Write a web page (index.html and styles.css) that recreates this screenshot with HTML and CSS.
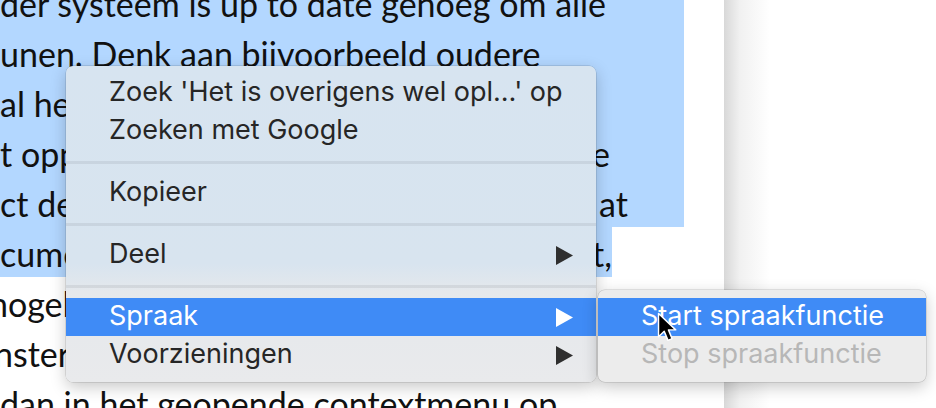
FILE: index.html
```html
<!DOCTYPE html>
<html lang="nl">
<head>
<meta charset="utf-8">
<title>Contextmenu</title>
<link rel="stylesheet" href="styles.css">
</head>
<body>
<div class="screen">
  <main class="doc">
    <div class="line sel">der systeem is up to date genoeg om alle</div>
    <div class="line sel">unen. Denk aan bijvoorbeeld oudere</div>
    <div class="line sel">al het</div>
    <div class="line sel"><span class="run run-4">t opp</span>e</div>
    <div class="line sel"><span class="run run-5">ct de</span>at</div>
    <div class="line sel part"><span class="run run-6">cume</span>t,</div>
    <div class="line shift-7">nogel</div>
    <div class="line shift-8">nster</div>
    <div class="line">dan in het geopende contextmenu op</div>
  </main>
  <aside class="side"></aside>

  <div class="menu main-menu">
    <div class="item">Zoek 'Het is overigens wel opl…' op</div>
    <div class="item">Zoeken met Google</div>
    <div class="sep"></div>
    <div class="item">Kopieer</div>
    <div class="sep"></div>
    <div class="item">Deel<svg class="arrow" width="17" height="19" viewBox="0 0 17 19"><polygon points="0,0 17,9.5 0,19"/></svg></div>
    <div class="sep"></div>
    <div class="item active">Spraak<svg class="arrow" width="17" height="19" viewBox="0 0 17 19"><polygon points="0,0 17,9.5 0,19"/></svg></div>
    <div class="item">Voorzieningen<svg class="arrow" width="17" height="19" viewBox="0 0 17 19"><polygon points="0,0 17,9.5 0,19"/></svg></div>
  </div>

  <div class="menu sub-menu">
    <div class="item active">Start spraakfunctie</div>
    <div class="item disabled">Stop spraakfunctie</div>
  </div>

  <svg class="cursor" width="22" height="32" viewBox="0 0 15 22"><path d="M1 1 V17 L4.9 13.3 L7.5 19.5 L10.3 18.3 L7.8 12.3 H12.8 Z" fill="#000" stroke="#fff" stroke-width="1" stroke-linejoin="round"/></svg>
</div>
</body>
</html>
```

FILE: styles.css
```css
* { box-sizing: border-box; }

html, body {
  margin: 0;
  padding: 0;
  background: #fff;
}

.screen {
  position: relative;
  width: 936px;
  height: 408px;
  overflow: hidden;
  display: flex;
}

.doc {
  width: 684px;
  flex: none;
  margin-top: -23px;
  font-family: Lato, "Open Sans", sans-serif;
  font-size: 34px;
  color: #111;
}

.line {
  height: 50px;
  padding-top: 5px;
  line-height: 44px;
  white-space: nowrap;
  overflow: hidden;
}

.line.sel { background: #b3d7ff; }
.line.part { width: fit-content; }
.line.shift-7 { text-indent: -11px; }
.line.shift-8 { text-indent: -6px; }

.run {
  display: inline-block;
  vertical-align: top;
  overflow: hidden;
  white-space: nowrap;
}
.run-4 { width: 592px; }
.run-5 { width: 599px; }
.run-6 { width: 592px; }

.side {
  flex: 1;
  margin-left: 40px;
  background: linear-gradient(to right, #d8d8d8 0, #f1f1f1 16px, #fff 46px);
}

.menu {
  position: absolute;
  padding: 8px 0;
  border-radius: 7px;
  font-family: Inter, "Liberation Sans", sans-serif;
  font-size: 27px;
  color: #262626;
  box-shadow: 0 0 0 0.5px rgba(0, 0, 0, 0.18), 0 5px 16px rgba(0, 0, 0, 0.22);
  overflow: hidden;
}

.main-menu {
  left: 66px;
  top: 66px;
  width: 530px;
  background: linear-gradient(to bottom, #d7e4f0 0, #d8e4ef 198px, #e5e8ec 226px, #e9eaec 100%);
  z-index: 2;
}

.sub-menu {
  left: 598px;
  top: 290px;
  width: 328px;
  background: #ececec;
  z-index: 3;
}

.item {
  height: 38px;
  line-height: 32px;
  padding: 0 23px 3px 43px;
  display: flex;
  align-items: center;
  justify-content: space-between;
  white-space: nowrap;
}

.item.active {
  background: #3f8bf6;
  color: #fff;
}

.item.disabled { color: #b7b7b7; }

.arrow { fill: #2f2f2f; flex: none; margin-top: 3px; }
.item.active .arrow { fill: #fff; }

.sep {
  height: 3px;
  margin: 11px 0 10px;
  background: rgba(0, 0, 0, 0.065);
}

.cursor {
  position: absolute;
  left: 657px;
  top: 312px;
  z-index: 4;
}
```
